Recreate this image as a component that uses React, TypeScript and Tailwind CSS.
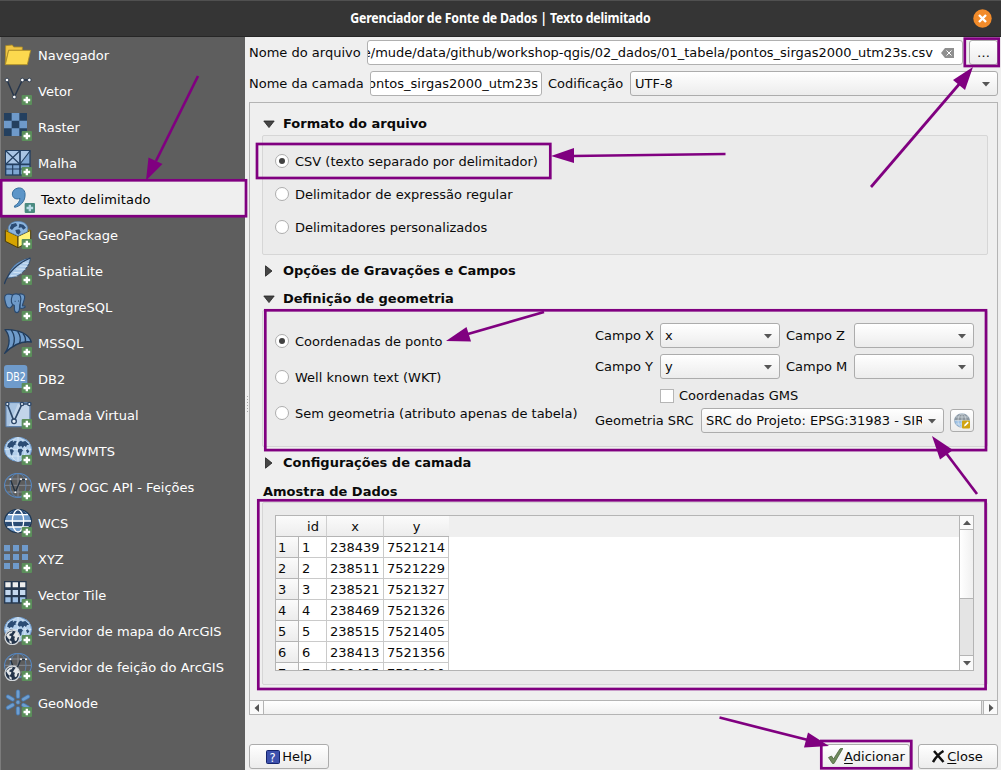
import React from 'react';

const Plus = ({ teal }: { teal?: boolean }) => (
  <g>
    <rect x="53" y="54" width="31" height="30" rx="3" fill={teal ? '#4a8a80' : '#5b8f5b'} />
    <path d="M68.500 59v20M58.500 69h20" stroke={teal ? '#b9dbe6' : '#fff'} strokeWidth="7" fill="none" />
  </g>
);

const Land = () => (
  <g fill="#2b4c74">
    <path d="M12 20l8-7 8-3-2 6 7-5 6 3-5 5 3 3-7 3-3 7-6-2-5 4-4-5-3 1z" />
    <path d="M17 37l8 0 5 5-4 5-2 9-4-5z" />
    <path d="M44 15l7-4 4 3 9-2 8 7 3 5-6 0-3 6-5-4-5 7-4-6-6 2-5-5z" />
    <path d="M43 36l9-1 5 5-4 6-1 9-5 2-2-9-4-5z" />
    <path d="M66 40l6-3 4 7-6 5z" />
  </g>
);

const Globe = () => (
  <g>
    <ellipse cx="42" cy="37" rx="40.500" ry="36" fill="#b4d0ec" stroke="#6a9ad0" strokeWidth="3" />
    <path d="M42 1v72M2 37h80M10 17h64M10 57h64" stroke="#e4f0fb" strokeWidth="2" />
    <ellipse cx="42" cy="37" rx="22" ry="36" fill="none" stroke="#e4f0fb" strokeWidth="2" />
    <Land />
  </g>
);

const WireGlobe = () => (
  <g fill="none">
    <path d="M42 1v72M2 37h80M8 18h68M10 57h64" stroke="#8b929a" strokeWidth="2.5" />
    <ellipse cx="42" cy="37" rx="24" ry="36" stroke="#5a86b8" strokeWidth="2.5" />
    <ellipse cx="42" cy="37" rx="40.5" ry="36" stroke="#5585bd" strokeWidth="3.5" />
    <path d="M19 19l15 39 16-38h15" stroke="#22303f" strokeWidth="4" />
    <g fill="#fff">
      <circle cx="19" cy="19" r="3" />
      <circle cx="34" cy="58" r="3" />
      <circle cx="51" cy="19" r="3" />
      <circle cx="66" cy="19" r="3" />
    </g>
  </g>
);

const Arc = () => (
  <g>
    <circle cx="25" cy="61" r="22" fill="#24344a" stroke="#d3d7da" strokeWidth="4" />
    <path
      d="M6 54l10-9 10-3-2 6-7 3-1 5 6 1-1 6-5 5-5-6zM30 51l6-8 7 6 3 10-6 3-1 8-6 3-2-8 2-6-6-2zM15 70l7 2 2 8-7-3z"
      fill="#e3e6e8"
    />
  </g>
);

const icons: Record<string, React.ReactNode> = {
  folder: (
    <g stroke="#a98a25" strokeWidth="2.5" strokeLinejoin="round">
      <path d="M4 70L5 14l20-2 4 6h26v10h-41z" fill="#f0c544" />
      <path d="M14 28h66L70 71H4z" fill="#fcd94e" />
    </g>
  ),
  vector: (
    <g>
      <path d="M9 9l22 51L55 9h22" fill="none" stroke="#26364c" strokeWidth="4.5" />
      <g fill="#fff" stroke="#26364c" strokeWidth="2.5">
        <circle cx="9" cy="9" r="5.5" />
        <circle cx="31" cy="60" r="5.5" />
        <circle cx="55" cy="9" r="5.5" />
        <circle cx="76" cy="9" r="5.5" />
      </g>
    </g>
  ),
  raster: (
    <g>
      <path d="M0 0h69v69H0z" fill="#24405f" />
      <path d="M23 0h23v23H23zM0 23h23v23H0zM46 23h23v23H46zM23 46h23v23H23z" fill="#6f9aca" />
    </g>
  ),
  mesh: (
    <g stroke="#233f60" fill="#7ea6d2">
      <rect x="5" y="5" width="73" height="73" strokeWidth="4" />
      <path d="M6 6h40v38H6z" fill="#a9c5e4" stroke="none" />
      <path d="M50 6h26L50 44z" fill="#a9c5e4" stroke="none" />
      <path d="M48 5v73M5 46h73" strokeWidth="5" fill="none" />
      <path d="M6 6l41 39M47 6L6 45M78 6L48 45M5 60h73M26 46v32" strokeWidth="3.5" fill="none" />
    </g>
  ),
  comma: (
    <path
      d="M33 9c14-2 23 8 21 24-1 17-14 31-31 34l-1-4c10-5 16-13 17-23-12 5-23-1-23-13 0-9 7-16 17-18z"
      fill="#5c95c8"
      stroke="#366f9e"
      strokeWidth="3"
    />
  ),
  package: (
    <g strokeLinejoin="round">
      <path d="M4 28l38 18v34L4 61z" fill="#d6a400" stroke="#4a3b0a" strokeWidth="3" />
      <path d="M42 46l38-18v32L42 80z" fill="#fff37a" stroke="#4a3b0a" strokeWidth="3" />
      <path d="M4 28L42 12l38 16-38 18z" fill="#9b7a12" />
      <path d="M14 32C8 12 24 1 42 1s34 11 28 31L42 45z" fill="#8db6df" stroke="#4f7fb3" strokeWidth="2" />
      <path d="M22 10l14-4 4 8-9 5-7 8-7-5zM46 8l12 3 8 9-8 6-6-7-8 2zM34 27l12-2 4 8-6 8-7-4z" fill="#2b4c74" />
    </g>
  ),
  feather: (
    <g strokeLinejoin="round">
      <path d="M79 3C54 8 32 20 20 40L10 63l12-1c18-3 32-12 41-24 9-11 15-21 16-35z" fill="#a9c8e8" stroke="#2b4a70" strokeWidth="2.5" />
      <path d="M79 3C54 7 32 20 20 40l-6 17C27 36 50 16 79 3z" fill="#6791c0" />
      <path d="M79 3C45 18 13 42 1 81" fill="none" stroke="#263f5e" strokeWidth="4" />
      <path d="M28 46l26 2M36 36l28 1M46 27l24 1M56 18l18 1M20 56l20 1" stroke="#dcebf8" strokeWidth="2.5" />
    </g>
  ),
  elephant: (
    <g fill="#6f9bca" stroke="#2a4a70" strokeWidth="3.5" strokeLinejoin="round">
      <path d="M15 3C3 3 0 10 3 23c2 12 7 22 13 22 5 0 8-7 11-10V6z" />
      <path d="M42 5c10-5 20-1 20 7 0 10-6 18-7 27h8v4c-6 4-10 4-15 2V12z" />
      <path d="M25 7c5-6 20-6 24 2 5 12-2 22-2 30 0 10 0 19-8 20-8 0-8-8-8-22-9-1-12-14-6-30z" />
      <path d="M32 25h3M42 24h3" strokeWidth="3" />
    </g>
  ),
  sail: (
    <g stroke="#213c5c" strokeWidth="4" strokeLinejoin="round">
      <path d="M3 2c40-1 72 13 79 37-26-4-53 6-80 34C20 48 19 20 3 2z" fill="#6f9bca" />
      <path d="M22 3c10 15 11 33 5 48M41 7c9 13 10 25 5 37M57 14c8 10 9 19 6 27" fill="none" />
    </g>
  ),
  db2: (
    <g>
      <rect x="0" y="0" width="70" height="69" rx="9" fill="#6f9bcb" />
      <text x="6" y="49" textLength="59" lengthAdjust="spacingAndGlyphs" className="font-['DejaVu_Sans']" fontSize="39" fill="#fff">
        DB2
      </text>
    </g>
  ),
  virtual: (
    <g>
      <rect x="6" y="5" width="72" height="72" rx="3" fill="#c2d5ea" stroke="#5d7fa8" strokeWidth="4" />
      <path d="M8 7h34L14 76H8z" fill="#9ebcdd" opacity=".7" />
      <path d="M10 9l20 52L54 9h22" fill="none" stroke="#2d4768" strokeWidth="5" />
      <g fill="#e8f0f8" stroke="#2d4768" strokeWidth="4">
        <circle cx="10" cy="9" r="5" />
        <circle cx="30" cy="61" r="7" />
        <circle cx="54" cy="9" r="5" />
        <circle cx="76" cy="9" r="5" />
      </g>
    </g>
  ),
  wms: <Globe />,
  wfs: <WireGlobe />,
  wcs: (
    <g>
      <ellipse cx="42" cy="36" rx="40" ry="35" fill="#6f9bcb" stroke="#1f3853" strokeWidth="4" />
      <path d="M13 17Q42-14 71 17zM3 37h78l-6 17H9z" fill="#2a4b74" />
      <path d="M12 17h60M3 36h78M10 54h64" stroke="#fff" strokeWidth="4" />
      <ellipse cx="42" cy="36" rx="17" ry="33" fill="#6f9bcb" stroke="#fff" strokeWidth="4" />
      <path d="M32 14Q42-6 52 14zM27 38h30l-3 15H30z" fill="#2a4b74" />
      <path d="M26 17h32M25 36h34M28 54h28" stroke="#fff" strokeWidth="4" />
    </g>
  ),
  xyz: (
    <path
      d="M0 0h18v19H0zM27 0h18v19H27zM54 0h18v19H54zM0 27h18v18H0zM27 27h18v18H27zM54 27h18v18H54zM0 54h18v18H0zM27 54h18v18H27zM54 54h18v18H54z"
      fill="#6f9aca"
    />
  ),
  tile: (
    <g>
      <path d="M0 0h68v68H0z" fill="#26384f" />
      <path d="M4 4h16v15H4zM26 4h16v15H26zM48 4h16v15H48z" fill="#eee" />
      <path d="M4 27h16v15H4zM26 27h16v15H26zM48 27h16v15H48z" fill="#c5d8ee" />
      <path d="M4 49h16v15H4zM26 49h16v15H26zM48 49h16v15H48z" fill="#9dbfe5" />
    </g>
  ),
  arcmap: (
    <g>
      <Globe />
      <Arc />
    </g>
  ),
  arcfeature: (
    <g>
      <WireGlobe />
      <Arc />
    </g>
  ),
  geonode: (
    <g stroke="#4878ae" strokeLinecap="round">
      <path d="M42 8v15M42 58v15M12 23l14 8M58 48l14 8M72 23l-14 8M26 48l-14 8" strokeWidth="13" />
      <path d="M42 8v15M42 58v15M12 23l14 8M58 48l14 8M72 23l-14 8M26 48l-14 8" strokeWidth="8" stroke="#6f9fd0" />
      <circle cx="42" cy="40" r="6" fill="#6f9fd0" strokeWidth="2" />
    </g>
  ),
};

const sources: [string, string][] = [
  ['folder', 'Navegador'],
  ['vector', 'Vetor'],
  ['raster', 'Raster'],
  ['mesh', 'Malha'],
  ['comma', 'Texto delimitado'],
  ['package', 'GeoPackage'],
  ['feather', 'SpatiaLite'],
  ['elephant', 'PostgreSQL'],
  ['sail', 'MSSQL'],
  ['db2', 'DB2'],
  ['virtual', 'Camada Virtual'],
  ['wms', 'WMS/WMTS'],
  ['wfs', 'WFS / OGC API - Feições'],
  ['wcs', 'WCS'],
  ['xyz', 'XYZ'],
  ['tile', 'Vector Tile'],
  ['arcmap', 'Servidor de mapa do ArcGIS'],
  ['arcfeature', 'Servidor de feição do ArcGIS'],
  ['geonode', 'GeoNode'],
];

const samples = [
  ['1', '238439', '7521214'],
  ['2', '238511', '7521229'],
  ['3', '238521', '7521327'],
  ['4', '238469', '7521326'],
  ['5', '238515', '7521405'],
  ['6', '238413', '7521356'],
  ['7', '238425', '7521420'],
];

const Tri = ({ dir = 'down' }: { dir?: 'down' | 'up' | 'left' | 'right' }) => {
  const d = { down: 'M0 2h8L4 6.5z', up: 'M0 6h8L4 1.5z', left: 'M6 0v8L1.5 4z', right: 'M2 0v8L6.5 4z' }[dir];
  return (
    <svg className="size-2 shrink-0" viewBox="0 0 8 8">
      <path d={d} fill="#555" />
    </svg>
  );
};

const Combo = ({ text, className }: { text: string; className: string }) => (
  <div
    className={`flex h-[25px] shrink-0 items-center rounded-[3px] border border-[#acacac] bg-linear-to-b from-white to-[#ececec] pr-[7px] pl-1 ${className}`}
  >
    <span className="min-w-0 flex-1 overflow-hidden leading-5 whitespace-nowrap">{text}</span>
    <span className="ml-[6px] flex">
      <Tri />
    </span>
  </div>
);

const Radio = ({ label, checked }: { label: string; checked?: boolean }) => (
  <div className="flex h-5 items-center gap-[6px]">
    <span className="flex size-[14px] shrink-0 items-center justify-center rounded-full border border-[#adadad] bg-white">
      {checked && <span className="size-[6.5px] rounded-full bg-[#404040]" />}
    </span>
    <span className="pt-[2px] whitespace-nowrap">{label}</span>
  </div>
);

const Section = ({ title, open, className }: { title: string; open?: boolean; className: string }) => (
  <div className={`flex items-center pl-[13px] font-bold ${className}`}>
    <svg className="mr-2 size-3" viewBox="0 0 12 12">
      <path d={open ? 'M.8 3h10.4L6 9.6z' : 'M2.5.8v10.4L9 6z'} fill="#454545" stroke="#222" strokeWidth=".8" />
    </svg>
    {title}
  </div>
);

const Group = ({ className, children }: { className: string; children: React.ReactNode }) => (
  <div className={`ml-3 w-[726px] shrink-0 rounded-[2px] border border-[#d6d6d6] bg-[#ebebeb] ${className}`}>{children}</div>
);

const Button = ({ className, children }: { className: string; children: React.ReactNode }) => (
  <div
    className={`flex h-[25px] shrink-0 items-center justify-center rounded-[3px] border border-[#acacac] bg-linear-to-b from-white to-[#ececec] ${className}`}
  >
    {children}
  </div>
);

const arrows = [
  { line: 'M198 76L156 161', head: '146,180.5 148.5,157.5 162.5,164' },
  { line: 'M725.5 154L572 156', head: '551,156 574,148 574,163' },
  { line: 'M871 187L961 82', head: '973,67 953,80 965,90' },
  { line: 'M544 312L468 334', head: '446,341 466.5,327 471,341.5' },
  { line: 'M977 494L946 453', head: '932,436 940,459.5 953,450' },
  { line: 'M719.5 717.5L808 740', head: '829,746 808,732.5 804,747.5' },
];

const frames = [
  [1.2, 180.3, 244.8, 35.9],
  [257, 144, 293.3, 34],
  [964.8, 38.6, 33.9, 27.4],
  [265.3, 310.3, 720.7, 139.8],
  [258.3, 500.3, 727.3, 188.7],
  [821.3, 741, 90, 27.3],
];

const Annotations = () => (
  <svg className="pointer-events-none absolute top-0 left-0" width="1001" height="770" viewBox="0 0 1001 770">
    <g stroke="#800080" strokeWidth="2.7" fill="none">
      {frames.map(([x, y, w, h]) => (
        <rect key={`${x}-${y}`} x={x} y={y} width={w} height={h} />
      ))}
      {arrows.map((a) => (
        <g key={a.line}>
          <path d={a.line} />
          <polygon points={a.head} fill="#800080" stroke="none" />
        </g>
      ))}
    </g>
  </svg>
);

const Sidebar = () => (
  <div className="w-[245px] shrink-0 border-l border-[#7c7c7c] bg-[#5e5e5e]">
    {sources.map(([icon, label]) => {
      const active = icon === 'comma';
      return (
        <div
          key={icon}
          className={`flex h-9 items-center gap-[6px] ${active ? 'bg-[#efefef] pl-[6px] tracking-[0.14px] text-black' : 'pl-[3px] text-white'}`}
        >
          <svg className="size-7 shrink-0" viewBox="0 0 84 84">
            {icons[icon]}
            {icon !== 'folder' && <Plus teal={active} />}
          </svg>
          <span className="pt-[2px] whitespace-nowrap">{label}</span>
        </div>
      );
    })}
  </div>
);

const SampleTable = () => (
  <div className="flex h-[156px] w-[699px] overflow-hidden border border-[#b4b4b4] bg-white">
    <div className="min-w-0 flex-1">
      <div className="flex h-[21px] bg-[#efefef]">
        <div className="flex bg-linear-to-b from-[#fbfbfb] to-[#ececec] text-center leading-[21px]">
          <div className="w-[51px] border-r border-b border-r-[#cfcfcf] border-b-[#b4b4b4] pl-6">id</div>
          <div className="w-[57px] border-r border-b border-r-[#cfcfcf] border-b-[#b4b4b4]">x</div>
          <div className="w-[65px] border-b border-[#b4b4b4]">y</div>
        </div>
      </div>
      {samples.map(([id, x, y]) => (
        <div key={id} className="flex h-[21px] leading-[21px]">
          <div className="w-[23px] border-r border-b border-[#b4b4b4] bg-linear-to-b from-[#fbfbfb] to-[#ececec] pl-[2px]">{id}</div>
          <div className="w-7 border-r border-b border-[#cacaca] pl-[3px]">{id}</div>
          <div className="w-[57px] border-r border-b border-[#cacaca] pl-[3px]">{x}</div>
          <div className="w-[65px] border-r border-b border-[#cacaca] pl-[3px]">{y}</div>
        </div>
      ))}
    </div>
    <div className="flex w-[14px] flex-col border-l border-[#b4b4b4] bg-[#e4e4e4]">
      <div className="flex h-[14px] items-center justify-center border-b border-[#b4b4b4] bg-[#fafafa]">
        <Tri dir="up" />
      </div>
      <div className="h-[69px] border-b border-[#b4b4b4] bg-linear-to-r from-white to-[#f0f0f0]" />
      <div className="mt-auto flex h-[15px] items-center justify-center border-t border-[#b4b4b4] bg-[#fafafa]">
        <Tri />
      </div>
    </div>
  </div>
);

const GeometryFields = () => (
  <div className="flex w-[379px] flex-col pt-3">
    <div className="flex h-[25px] items-center">
      <span className="w-[65px]">Campo X</span>
      <Combo text="x" className="w-[120px]" />
      <span className="w-[74px] pl-[6px]">Campo Z</span>
      <Combo text="" className="w-[120px]" />
    </div>
    <div className="mt-[6px] flex h-[25px] items-center">
      <span className="w-[65px]">Campo Y</span>
      <Combo text="y" className="w-[120px]" />
      <span className="w-[74px] pl-[6px]">Campo M</span>
      <Combo text="" className="w-[120px]" />
    </div>
    <div className="mt-[5px] mb-px flex h-[23px] items-center pl-[65px]">
      <span className="mr-[5px] size-[14px] border border-[#b6b6b6] bg-white" />
      <span className="pt-px">Coordenadas GMS</span>
    </div>
    <div className="flex h-[25px] items-center">
      <span className="w-[106px] whitespace-nowrap">Geometria SRC</span>
      <Combo text="SRC do Projeto: EPSG:31983 - SIRGAS 2000" className="w-[243px]" />
      <Button className="ml-[6px] !h-[23px] w-6">
        <svg className="size-4" viewBox="0 0 16 16">
          <ellipse cx="8" cy="7.5" rx="7.5" ry="6.8" fill="#9ec2e6" stroke="#7a94ad" strokeWidth=".6" />
          <path d="M.5 7.5C.7 3.5 4 .7 8 .7s7.300 2.800 7.500 6.800z" fill="#8d979f" />
          <path d="M8 .7v14M.6 7.500h15M2 4h12M2 11h12" stroke="#dfe7ee" strokeWidth=".6" />
          <ellipse cx="8" cy="7.5" rx="4" ry="6.8" fill="none" stroke="#dfe7ee" strokeWidth=".6" />
          <rect x="8" y="7.500" width="8" height="8" rx="1" fill="#d1a411" />
          <path d="M10 13.500l.6-2 3-3 1.200 1.200-3 3z" fill="#fff" />
        </svg>
      </Button>
    </div>
  </div>
);

export default function App() {
  return (
    <div className="relative flex h-[770px] w-[1001px] flex-col overflow-hidden bg-[#efefef] font-['DejaVu_Sans',sans-serif] text-[13px] leading-5 text-[#0a0a0a]">
      <div className="flex h-[37px] shrink-0 items-center border-t border-b border-t-[#505050] border-b-[#262626] bg-[#353535] pr-[9px]">
        <div className="flex-1 pb-[2px] pl-[28px] text-center font-['Noto_Sans',sans-serif] text-[13.3px] font-bold tracking-[-0.2px] text-white">
          <span className="inline-block scale-x-[0.93] whitespace-nowrap">Gerenciador de Fonte de Dados | Texto delimitado</span>
        </div>
        <svg className="size-[19px]" viewBox="0 0 19 19">
          <circle cx="9.500" cy="9.500" r="9.200" fill="#f28b2a" />
          <path d="M6 6l7 7M13 6l-7 7" stroke="#fff" strokeWidth="2.400" />
        </svg>
      </div>
      <div className="flex min-h-0 flex-1">
        <Sidebar />
        <div className="flex w-1 shrink-0 flex-col items-center justify-center gap-[2px]">
          {[0, 1, 2, 3, 4, 5].map((n) => (
            <span key={n} className="size-px bg-[#a8a8a8]" />
          ))}
        </div>
        <div className="flex w-[749px] shrink-0 flex-col pt-[3px]">
          <div className="flex h-[25px] items-center">
            <span className="w-[118px] whitespace-nowrap">Nome do arquivo</span>
            <div className="flex h-[25px] w-[596px] items-center justify-end rounded-[3px] border border-[#b0b0b0] bg-white pr-[8px]">
              <div className="flex min-w-0 flex-1 justify-end overflow-hidden">
                <span className="tracking-[-0.012px] whitespace-nowrap">
                  e/mude/data/github/workshop-qgis/02_dados/01_tabela/pontos_sirgas2000_utm23s.csv
                </span>
              </div>
              <svg className="ml-[8px] h-[10px] w-[13px] shrink-0" viewBox="0 0 13 10">
                <path d="M0 5L4 0h9v10H4z" fill="#8f8f8f" />
                <path d="M5.500 2.500l5 5M10.500 2.500l-5 5" stroke="#fff" />
              </svg>
            </div>
            <Button className="ml-[6px] w-[29px]">…</Button>
          </div>
          <div className="mt-[6px] flex h-[25px] items-center">
            <span className="w-[121px] whitespace-nowrap">Nome da camada</span>
            <div className="flex h-[25px] w-[172px] items-center rounded-[3px] border border-[#b0b0b0] bg-white pr-[3px]">
              <div className="flex min-w-0 flex-1 justify-end overflow-hidden">
                <span className="whitespace-nowrap">pontos_sirgas2000_utm23s</span>
              </div>
            </div>
            <span className="w-[88px] pl-[6px]">Codificação</span>
            <Combo text="UTF-8" className="w-[368px]" />
          </div>
          <div className="mt-[6px] flex h-[613px] shrink-0 flex-col border border-[#b4b4b4]">
            <Section title="Formato do arquivo" open className="mt-[10px] h-[22px]" />
            <Group className="h-[120px] space-y-[13px] pt-[15px] pl-3">
              <Radio label="CSV (texto separado por delimitador)" checked />
              <Radio label="Delimitador de expressão regular" />
              <Radio label="Delimitadores personalizados" />
            </Group>
            <Section title="Opções de Gravações e Campos" className="mt-[5px] h-[22px]" />
            <Section title="Definição de geometria" open className="mt-[6px] h-[22px]" />
            <Group className="flex h-[137px] justify-between pr-[13px] pl-3">
              <div className="space-y-4 pt-5">
                <Radio label="Coordenadas de ponto" checked />
                <Radio label="Well known text (WKT)" />
                <Radio label="Sem geometria (atributo apenas de tabela)" />
              </div>
              <GeometryFields />
            </Group>
            <Section title="Configurações de camada" className="mt-[5px] h-[22px]" />
            <div className="mt-[6px] h-[22px] pl-[13px] leading-[24px] font-bold">Amostra de Dados</div>
            <Group className="h-[183px] pt-3 pl-3">
              <SampleTable />
            </Group>
            <div className="mt-auto flex h-[14px] shrink-0 border-t border-[#b4b4b4] bg-[#fafafa]">
              <div className="flex w-[14px] items-center justify-center border-r border-[#b4b4b4]">
                <Tri dir="left" />
              </div>
              <div className="flex-1 border-r border-[#b4b4b4] bg-linear-to-b from-white to-[#f0f0f0]" />
              <div className="w-[2px] border-r border-[#b4b4b4] bg-[#e4e4e4]" />
              <div className="flex w-[13px] items-center justify-center">
                <Tri dir="right" />
              </div>
            </div>
          </div>
          <div className="mt-[29px] flex">
            <Button className="w-20 gap-[2px]">
              <svg className="size-[14px]" viewBox="0 0 14 14">
                <rect x=".5" y=".5" width="13" height="13" rx="1" fill="#3d51ad" stroke="#15246e" />
                <text x="3.600" y="11.500" fontSize="11.500" fill="#fff">
                  ?
                </text>
              </svg>
              Help
            </Button>
            <Button className="ml-[492px] w-[89px] gap-px pl-[2px]">
              <svg className="mb-[2px] h-4 w-[15px]" viewBox="0 0 15 16">
                <path d="M.5 9.500l3-1.500 2 3L12 .8l3-.6L6 15.500H4.500z" fill="#6f8a5d" stroke="#4f663f" strokeWidth=".8" />
              </svg>
              <span>
                <span className="underline underline-offset-2">A</span>dicionar
              </span>
            </Button>
            <Button className="ml-2 w-20 gap-[2px] pr-px">
              <svg className="size-[13px]" viewBox="0 0 13 13">
                <path d="M2 1l9.500 11M11.500 1Q6 4 1 12" stroke="#111" strokeWidth="2.500" fill="none" />
              </svg>
              <span>
                <span className="underline underline-offset-2">C</span>lose
              </span>
            </Button>
          </div>
        </div>
      </div>
      <Annotations />
    </div>
  );
}
